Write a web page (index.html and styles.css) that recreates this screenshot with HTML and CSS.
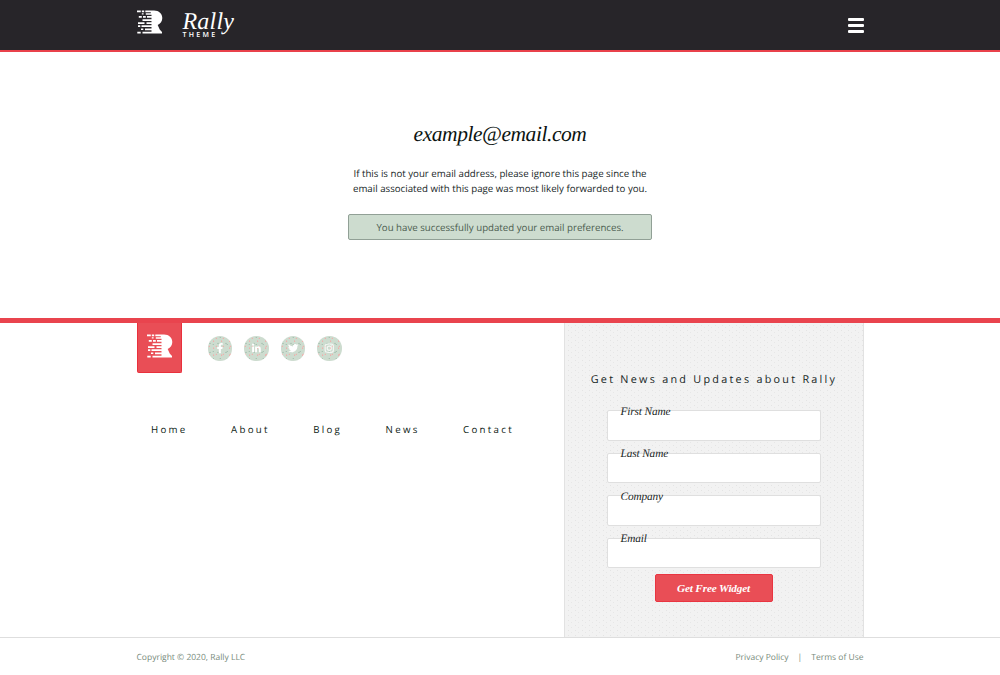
FILE: index.html
```html
<!DOCTYPE html>
<html lang="en">
<head>
<meta charset="utf-8">
<title>Rally Theme</title>
<link rel="stylesheet" href="styles.css">
</head>
<body>
<svg class="defs" width="0" height="0" aria-hidden="true">
  <symbol id="mark" viewBox="0 0 26 24">
    <path d="M0 .5h3.800v1.700H0zM4.800.5h2.400v1.700H4.800zM8.300.5H17c5 0 8.300 3.200 8.300 7.500 0 3.300-1.800 5.800-4.600 7l2 4.500 2.300 2.500v1.500H5.500v-1.800h9v-1.500H8v-1.800h6.500v-1.300H4.500v-1.800h10v-1.300H9.500v-1.700h5v-1.300H5.500V9.200h9V7.800H10V6h4.500V4.700H8.800V3.200h5V2.200H8.300zM4.800 3.300h1.800v1.300H4.800zM1.800 6h3v1.700h-3zM6 6h2.800v1.700H6zM1 12.300h6.500v1.600H1zM1 15.300h2.300v1.700H1zM4 18.400h2.300v1.600H4zM.3 21.700h3.400v1.800H.3z"/>
  </symbol>
</svg>
<header class="top">
  <div class="wrap top-row">
    <a class="brand">
      <svg class="mark"><use href="#mark"/></svg>
      <span class="word"><span class="rally">Rally</span><span class="theme">THEME</span></span>
    </a>
    <div class="burger"><i></i><i></i><i></i></div>
  </div>
</header>
<main>
  <h1>example@email.com</h1>
  <p class="note">If this is not your email address, please ignore this page since the<br>email associated with this page was most likely forwarded to you.</p>
  <div class="alert">You have successfully updated your email preferences.</div>
</main>
<footer>
  <div class="wrap foot">
    <div class="left">
      <div class="social-row">
        <div class="flag"><svg class="mark"><use href="#mark"/></svg></div>
        <div class="social">
          <a><svg viewBox="0 0 24 24"><path d="M10.600 17v-4.300H9v-1.900h1.600V9.400c0-1.600 1-2.500 2.500-2.500l1.400.1v1.600h-.9c-.8 0-1 .4-1 1v1.200h1.800l-.3 1.900h-1.500V17z"/></svg></a>
          <a><svg viewBox="0 0 24 24"><path d="M8 10.200h1.800V16H8zM8.900 7.400a1 1 0 1 1 0 2.100 1 1 0 0 1 0-2.100zM10.900 10.200h1.700v.8c.3-.5.900-.9 1.700-.9 1.800 0 2.100 1.200 2.100 2.700V16h-1.800v-2.800c0-.7 0-1.500-.9-1.500s-1 .7-1 1.500V16h-1.800z"/></svg></a>
          <a><svg viewBox="0 0 24 24"><path d="M17 8.800c-.4.200-.8.300-1.200.3.400-.2.700-.6.900-1.100-.4.200-.8.400-1.300.5a2.100 2.100 0 0 0-3.600 1.900A6 6 0 0 1 7.500 8.200a2.100 2.100 0 0 0 .7 2.800c-.4 0-.7-.1-1-.3 0 1 .7 1.900 1.700 2.100-.3.100-.6.100-.9 0 .3.900 1 1.500 2 1.500-.9.700-1.900 1-3 .9a6 6 0 0 0 9.100-5.300c.4-.3.700-.7.900-1.100z"/></svg></a>
          <a><svg class="soft" viewBox="0 0 24 24"><g class="line"><rect x="8" y="8" width="8" height="8" rx="2"/><circle cx="12" cy="12" r="2"/></g><circle cx="14.300" cy="9.700" r=".6"/></svg></a>
        </div>
      </div>
      <nav><a>Home</a><a>About</a><a>Blog</a><a>News</a><a>Contact</a></nav>
    </div>
    <form class="panel">
      <h2>Get News and Updates about Rally</h2>
      <div class="field"><label>First Name</label></div>
      <div class="field"><label>Last Name</label></div>
      <div class="field"><label>Company</label></div>
      <div class="field"><label>Email</label></div>
      <button type="button">Get Free Widget</button>
    </form>
  </div>
  <div class="legal">
    <div class="wrap legal-row">
      <span>Copyright © 2020, Rally LLC</span>
      <span class="links"><a>Privacy Policy</a><span>|</span><a>Terms of Use</a></span>
    </div>
  </div>
</footer>
</body>
</html>
```
FILE: styles.css
```css
* { box-sizing: border-box; }
body {
  margin: 0;
  background: #fff;
  color: #17261f;
  font-family: "Open Sans", sans-serif;
  font-size: 10px;
  text-rendering: geometricPrecision;
}
.defs { position: absolute; }
.wrap { width: 727px; margin: 0 auto; }
.top { height: 52px; background: #272529; border-bottom: 2px solid #e9414b; }
.top-row { display: flex; justify-content: space-between; }
.brand { display: flex; color: #fff; }
.mark { display: block; width: 26px; height: 24px; fill: #fff; }
.brand .mark { margin-top: 10px; }
.word { display: flex; flex-direction: column; margin-left: 20px; }
.rally {
  height: 32px;
  font: italic 24px/24px "Liberation Serif", serif;
  padding-top: 10px;
  letter-spacing: .2px;
}
.theme { font-size: 7px; line-height: 8px; font-weight: 600; letter-spacing: 2.300px; }
.burger { display: grid; gap: 3px; width: 16px; margin-top: 18px; align-content: start; }
.burger i { height: 3px; background: #fff; border-radius: 1px; }

main { height: 266px; padding-top: 68px; text-align: center; }
h1 {
  margin: 0;
  font: italic 21.500px/28px "Liberation Serif", serif;
  letter-spacing: -.44px;
  color: #0c1411;
}
.note { margin: 19px 0 0; font-size: 9.700px; line-height: 14.500px; }
.alert {
  width: 304px;
  height: 26px;
  margin: 18px auto 0;
  border: 1px solid #91a096;
  border-radius: 2px;
  background: #cddccf;
  color: #4c5c50;
  font-size: 9.700px;
  line-height: 26px;
}

footer { border-top: 5px solid #e9444e; }
.foot { display: flex; justify-content: space-between; height: 314px; }
.social-row { display: flex; }
.flag {
  width: 45px;
  height: 50px;
  padding: 11px 0 0 9px;
  background: #e94e56;
  border: solid #e9303c;
  border-width: 0 1px 1px;
  border-radius: 0 0 2px 2px;
}
.social { display: flex; gap: 12px; margin: 13px 0 0 26px; }
.social a {
  width: 24.500px;
  height: 24.500px;
  border-radius: 50%;
  background-color: #cddccf;
  background-image:
    radial-gradient(circle at 20% 30%, #efb0ad .6px, transparent 1px),
    radial-gradient(circle at 70% 75%, #efb0ad .6px, transparent 1px),
    radial-gradient(circle at 75% 20%, #a8c2b2 .5px, transparent .9px),
    radial-gradient(circle at 25% 80%, #a8c2b2 .5px, transparent .9px);
  background-size: 7px 8px, 8px 7px, 7px 7px, 8px 9px;
}
.social svg { display: block; fill: #fff; }
.social .soft { opacity: .75; }
.line { fill: none; stroke: #fff; stroke-width: 1.200; }
nav { display: flex; gap: 43.400px; margin: 49px 0 0 14.500px; color: #0c1a13; }
nav a { font-size: 9.700px; line-height: 16px; letter-spacing: 2.300px; }

.panel {
  width: 300px;
  padding: 49px 42px 0;
  border: solid #e2e2e2;
  border-width: 0 1px;
  background-color: #f2f2f2;
  background-image: radial-gradient(circle, #e4e4e4 .5px, transparent .8px), radial-gradient(circle, #e7e7e7 .5px, transparent .8px);
  background-size: 7px 5px, 7px 5px;
  background-position: 0 0, 3px 2px;
}
h2 {
  margin: 0 -31px 22px -30px;
  font-size: 10.800px;
  line-height: 16px;
  font-weight: 400;
  letter-spacing: 2.270px;
  white-space: nowrap;
  text-align: center;
}
.field {
  height: 30.500px;
  margin-bottom: 12px;
  padding-left: 13px;
  background: #fff;
  border: 1px solid #dfdfdf;
  border-radius: 2px;
}
.field label {
  display: block;
  margin-top: -7.500px;
  font: italic 11.300px/16px "Liberation Serif", serif;
  letter-spacing: -.12px;
  color: #17231c;
}
button {
  display: block;
  width: 118px;
  height: 28px;
  margin: -6.500px auto 0;
  padding: 0;
  border: 1px solid #e93541;
  border-radius: 2px;
  background: #e94e56;
  color: #fff;
  font: italic bold 11.200px/26px "Liberation Serif", serif;
  letter-spacing: -.14px;
}
.legal { height: 38px; border-top: 1px solid #dedede; }
.legal-row { display: flex; justify-content: space-between; padding-top: 13px; font-size: 8.500px; line-height: 14px; color: #788b7c; }
.links { display: flex; gap: 9px; }
```
